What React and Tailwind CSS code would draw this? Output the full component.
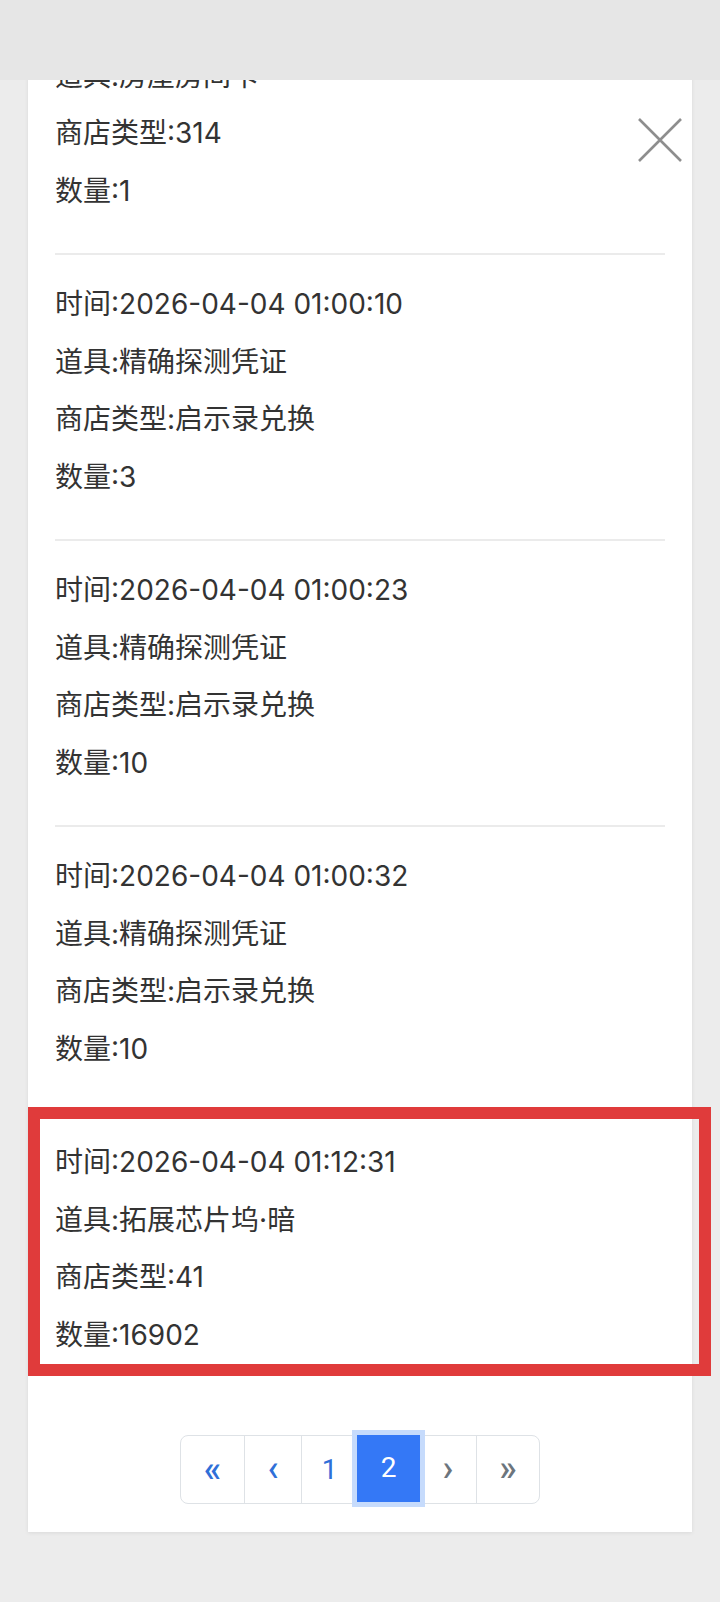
import { useState } from "react";

const RECORDS = [
  { time: "2026-04-03 23:58:47", item: "房屋房间卡", shop: "314", count: "1" },
  { time: "2026-04-04 01:00:10", item: "精确探测凭证", shop: "启示录兑换", count: "3" },
  { time: "2026-04-04 01:00:23", item: "精确探测凭证", shop: "启示录兑换", count: "10" },
  { time: "2026-04-04 01:00:32", item: "精确探测凭证", shop: "启示录兑换", count: "10" },
  { time: "2026-04-04 01:12:31", item: "拓展芯片坞·暗", shop: "41", count: "16902" },
];

const FONT = { fontFamily: 'Inter, "Noto Sans CJK SC", sans-serif' };

function Record({ r, last, highlight }) {
  return (
    <div
      className={
        "relative pt-[21px] " +
        (last ? "pb-[34px]" : "pb-[33px] border-b-2 border-[#ebebeb]")
      }
    >
      <p>时间:{r.time}</p>
      <p>道具:{r.item}</p>
      <p>商店类型:{r.shop}</p>
      <p>数量:{r.count}</p>
      {highlight && (
        <div className="pointer-events-none absolute -top-[6px] -left-[27px] -right-[46px] bottom-[22px] border-[12px] border-[#e03b3b]" />
      )}
    </div>
  );
}

function Pager({ page, setPage }) {
  const cell = "flex items-center justify-center h-[67px] border-l-[1.5px] border-[#dee2e6]";
  return (
    <div className="flex justify-center mt-[37px]" style={{ fontFamily: "Roboto, sans-serif" }}>
      <div className="flex border-[1.5px] border-[#dee2e6] rounded-[8px] text-[28px]">
        <button onClick={() => setPage(1)} className="flex items-center justify-center h-[67px] w-[63px] text-[#2f6fd8] text-[36px] font-medium">«</button>
        <button onClick={() => setPage(1)} className={cell + " w-[57px] text-[#2f6fd8] text-[36px] font-medium"}>‹</button>
        <button onClick={() => setPage(1)} className={cell + " w-[56px] text-[#2f6fd8]"}>1</button>
        <button className="relative z-10 flex items-center justify-center h-[67px] w-[63px] -my-[1.5px] bg-[#3478f6] text-white shadow-[0_0_0_5px_#c6dbfc]">
          {page}
        </button>
        <button className="flex items-center justify-center h-[67px] w-[56px] text-[#6c757d] text-[36px] font-medium">›</button>
        <button className={cell + " w-[63px] text-[#6c757d] text-[36px] font-medium"}>»</button>
      </div>
    </div>
  );
}

export default function App() {
  const [page, setPage] = useState(2);
  const [open, setOpen] = useState(true);

  return (
    <div className="relative min-h-[1602px] bg-[#ececec] overflow-hidden" style={FONT}>
      <div className="mx-[28px] -mt-[31px] bg-white shadow-[0_1px_4px_rgba(0,0,0,0.08)] px-[27px] pb-[28px] text-[28px] leading-[57.5px] text-[#333]">
        {RECORDS.map((r, i) => (
          <Record key={i} r={r} last={i === RECORDS.length - 1} highlight={i === RECORDS.length - 1} />
        ))}
        <Pager page={page} setPage={setPage} />
      </div>

      {/* fixed header strip */}
      <div className="absolute top-0 left-0 right-0 h-[80px] bg-[#e6e6e6]" />

      {open && (
        <button
          onClick={() => setOpen(false)}
          className="absolute left-[638px] top-[118px] w-[44px] h-[44px]"
          aria-label="关闭"
        >
          <svg viewBox="0 0 44 44" className="w-full h-full">
            <path d="M1 1 L43 43 M43 1 L1 43" stroke="#8e8e8e" strokeWidth="2.6" fill="none" />
          </svg>
        </button>
      )}
    </div>
  );
}
